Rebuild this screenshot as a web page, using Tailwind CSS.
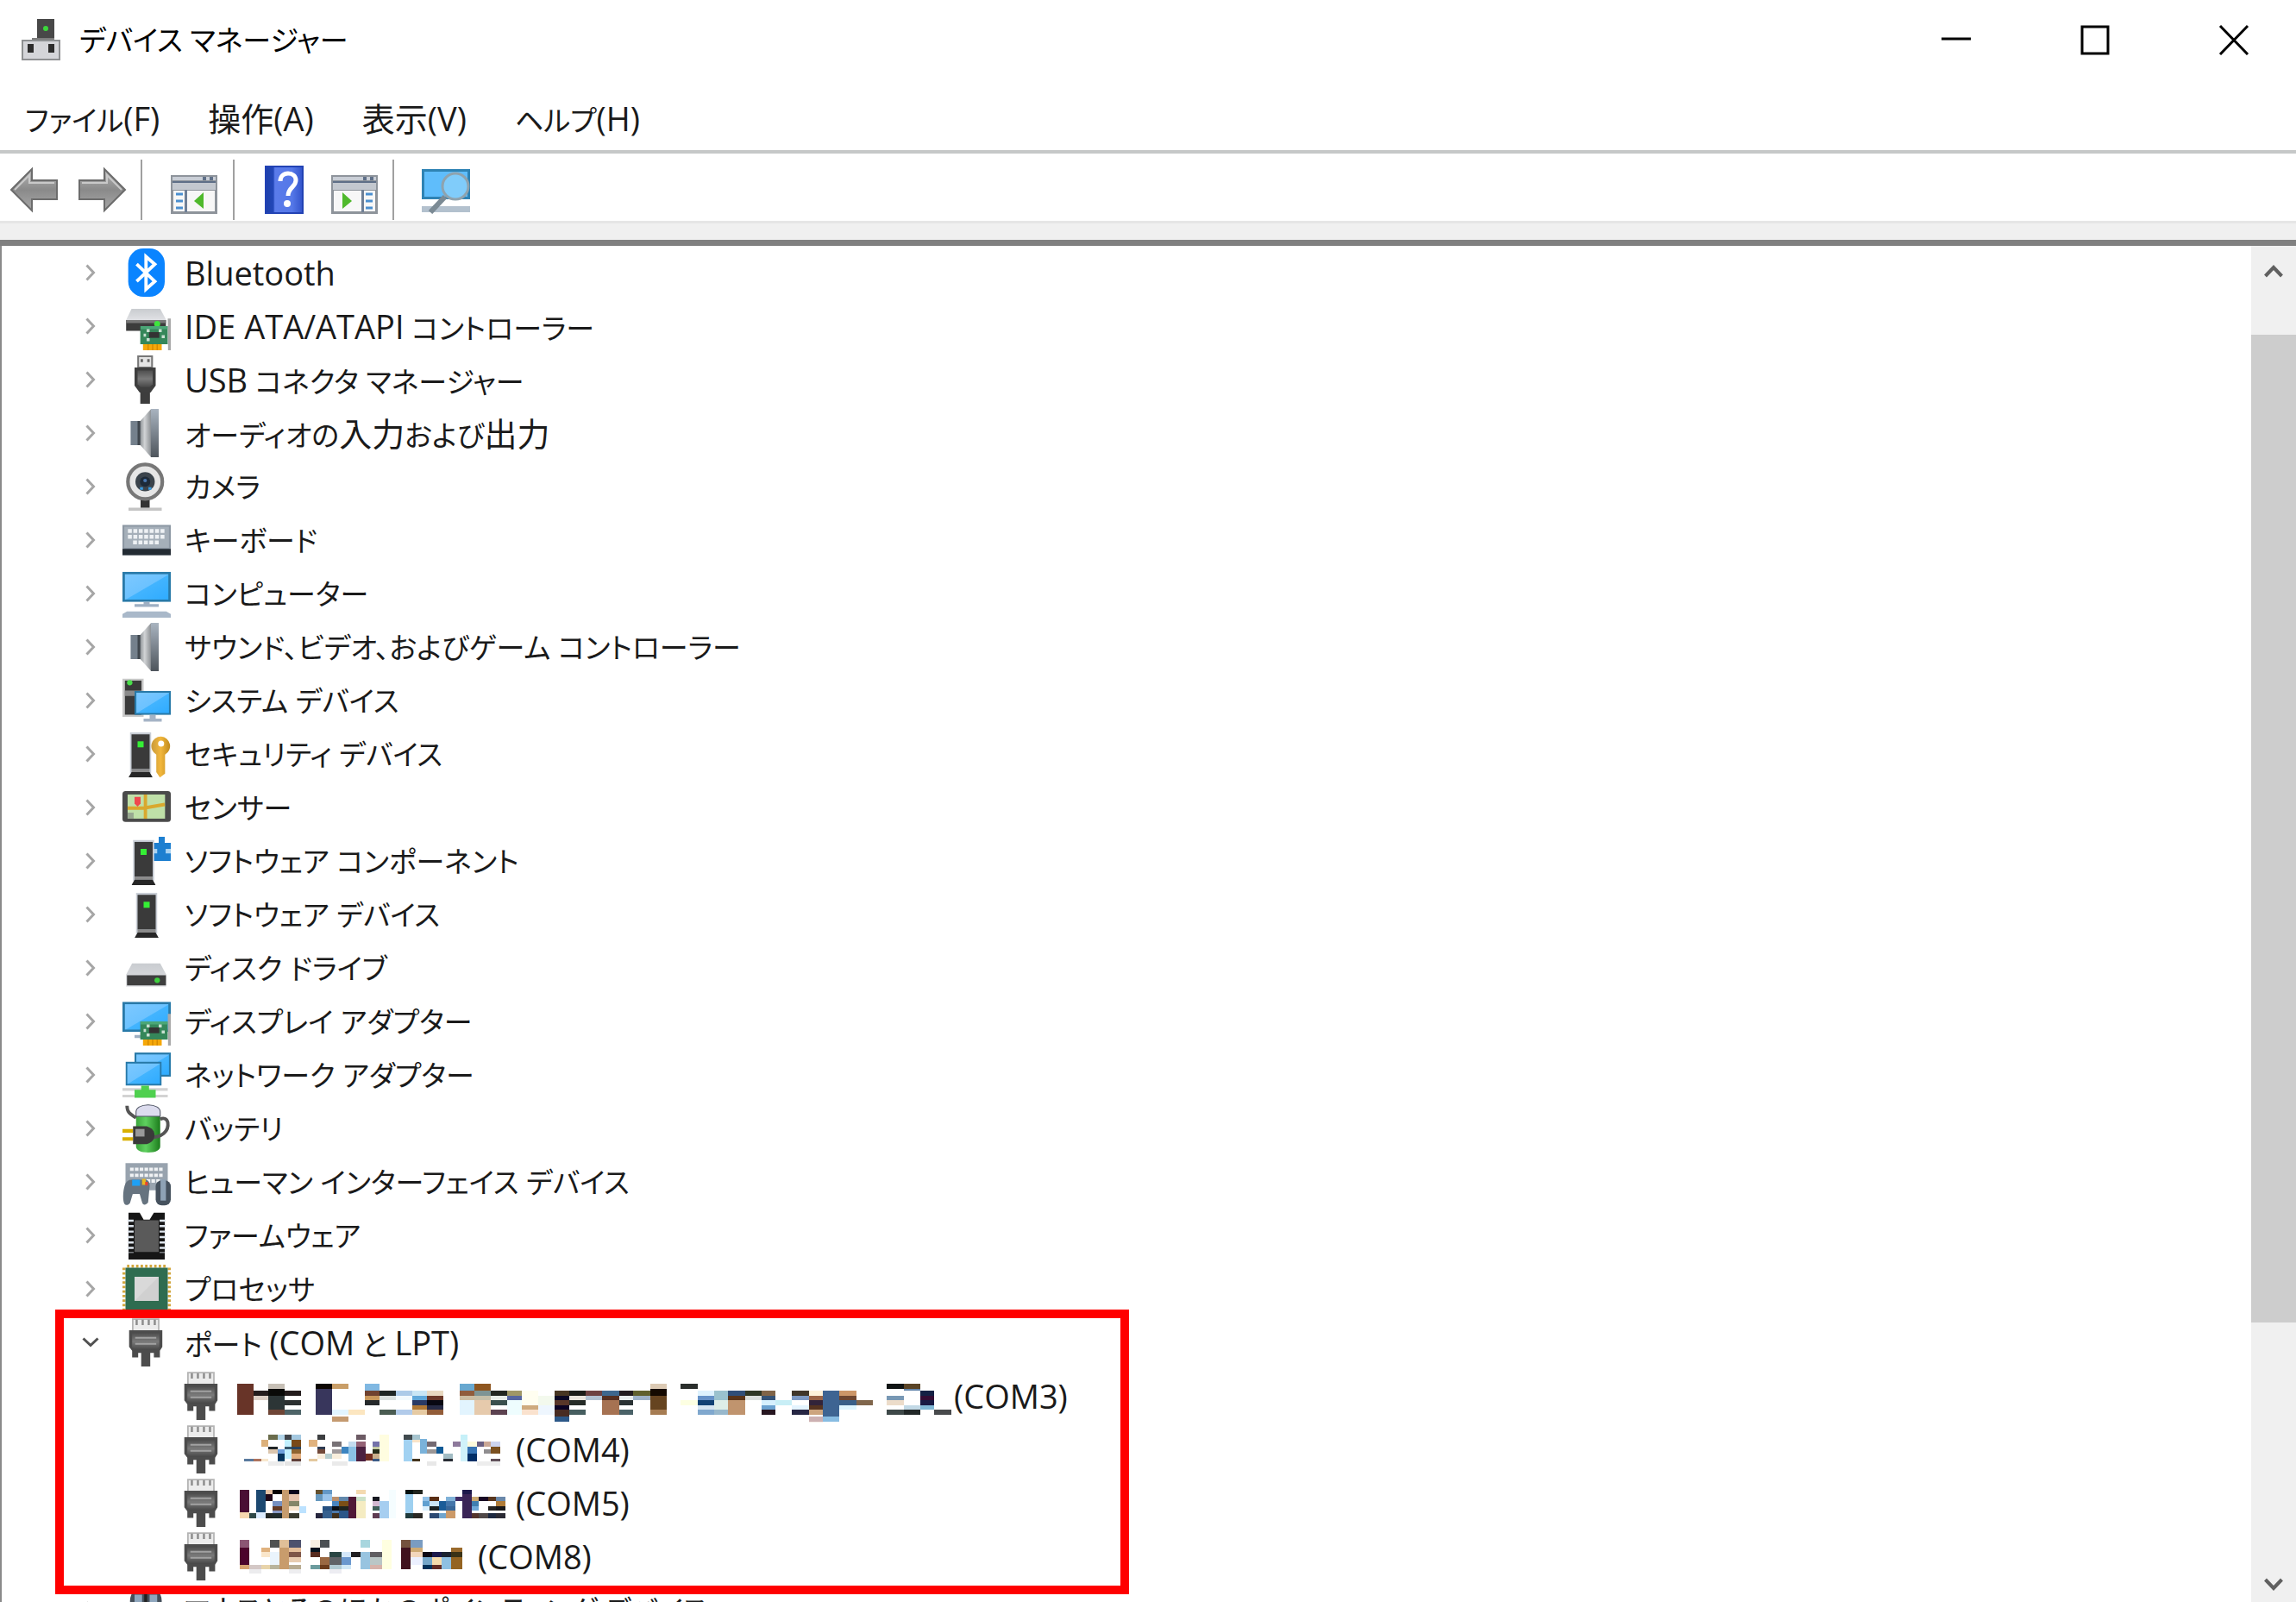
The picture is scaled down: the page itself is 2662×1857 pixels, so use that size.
<!DOCTYPE html>
<html lang="ja">
<head>
<meta charset="utf-8">
<title>デバイス マネージャー</title>
<script src="https://cdn.jsdelivr.net/npm/@tailwindcss/browser@4"></script>
</head>
<body class="h-screen overflow-hidden bg-white text-[#1a1a1a] font-['Open_Sans','Noto_Sans_CJK_JP',sans-serif] text-[33px] [font-feature-settings:'palt']">

<svg class="absolute h-0 w-0" aria-hidden="true">
  <defs>
    <linearGradient id="screen" x1="0" y1="0" x2="1" y2="1"><stop offset="0" stop-color="#7cc8ff"/><stop offset=".5" stop-color="#6cc2ff"/><stop offset=".52" stop-color="#42b4ff"/><stop offset="1" stop-color="#2fabff"/></linearGradient>
    <linearGradient id="metal" x1="0" y1="0" x2="1" y2="0"><stop offset="0" stop-color="#8f9498"/><stop offset=".4" stop-color="#d2d4d6"/><stop offset="1" stop-color="#8a8e92"/></linearGradient>
    <linearGradient id="lid" x1="0" y1="0" x2="0" y2="1"><stop offset="0" stop-color="#c9ccd0"/><stop offset="1" stop-color="#e0e1e4"/></linearGradient>
    <linearGradient id="rim" x1="0" y1="0" x2="0" y2="1"><stop offset="0" stop-color="#a9b4c0"/><stop offset="1" stop-color="#4e555c"/></linearGradient>
    <linearGradient id="plug" x1="0" y1="0" x2="0" y2="1"><stop offset="0" stop-color="#505050"/><stop offset=".5" stop-color="#7a7a7a"/><stop offset="1" stop-color="#484848"/></linearGradient>
    <linearGradient id="gold" x1="0" y1="0" x2="1" y2="0"><stop offset="0" stop-color="#c99a3a"/><stop offset=".5" stop-color="#f2b73c"/><stop offset="1" stop-color="#c08a1c"/></linearGradient>
    <linearGradient id="green" x1="0" y1="0" x2="1" y2="0"><stop offset="0" stop-color="#3ba53b"/><stop offset=".4" stop-color="#5fd05f"/><stop offset="1" stop-color="#1c7c1c"/></linearGradient>
    <linearGradient id="arrow" x1="0" y1="0" x2="0" y2="1"><stop offset="0" stop-color="#b5b5b5"/><stop offset=".5" stop-color="#8a8a8a"/><stop offset="1" stop-color="#a8a8a8"/></linearGradient>
    <linearGradient id="help" x1="0" y1="0" x2="1" y2="0"><stop offset="0" stop-color="#1c3fa8"/><stop offset=".22" stop-color="#2347b8"/><stop offset=".26" stop-color="#5a7bea"/><stop offset=".7" stop-color="#5578e8"/><stop offset="1" stop-color="#2f50c8"/></linearGradient>
  </defs>

  <symbol id="chevron" viewBox="0 0 12 20"><path d="M1.500 1.500L9.500 10L1.500 18.500" fill="none" stroke="#a6a6a6" stroke-width="3"/></symbol>

  <symbol id="card" viewBox="0 0 16 16">
    <rect x="5.900" y="8" width="9.100" height="6" fill="#35875a"/><path d="M6 8h9v1H6z" fill="#4ba677"/>
    <rect x="8.800" y="10" width="3.400" height="1.900" fill="#333"/>
    <path d="M8 9h1v1H8zM12 9h1v1h-1zM13 11h1v1h-1zM8 12h1v1H8zM7 10.500h.800v1H7z" fill="#c9e0d2"/>
    <rect x="6.800" y="14" width="6.200" height="2" fill="#f5a80a"/><path d="M8.500 14v2M10 14v2M11.500 14v2" stroke="#d58a00" stroke-width=".4"/>
    <path d="M15 5.500h1V16h-.900z" fill="#a9a9a9"/>
  </symbol>
  <symbol id="monitor" viewBox="0 0 16 10" preserveAspectRatio="none"><rect width="16" height="10" fill="#2879a8"/><rect x=".8" y=".8" width="14.400" height="8.400" fill="url(#screen)"/></symbol>
  <symbol id="tower" viewBox="0 0 8 15">
    <rect x=".5" y="0" width="7" height="13.500" fill="#c9ced6"/><rect x="1" y=".7" width="6" height="11.500" fill="#3a3a3a"/>
    <rect x="1" y="12.200" width="6" height="1" fill="#8a8a8a"/><path d="M1 13.200h6l1 1.800H0z" fill="#262626"/>
    <rect x="3" y="3" width="2" height="2" fill="#35ef35"/>
  </symbol>

  <symbol id="bluetooth" viewBox="0 0 16 16"><rect x="1.900" width="12.100" height="16" rx="5" fill="#0a84ff"/><path d="M4.700 5.200L10.700 10.900L7.800 13.500V2.700L10.700 5.200L4.700 10.900" fill="none" stroke="#fff" stroke-width="1.100"/></symbol>
  <symbol id="ide" viewBox="0 0 16 16"><path d="M3 2.300h9.500L14.500 6H1.200z" fill="url(#lid)"/><path d="M1.200 6h13.200v3.600H1.200z" fill="#3c3c3c"/><path d="M1.200 6h13.200v1H1.200z" fill="#777"/><circle cx="11.500" cy="7.300" r="1" fill="#3ee43e"/><use href="#card"/></symbol>
  <symbol id="usb" viewBox="0 0 16 16"><path d="M5.200.300h4.600V4H5.200z" fill="#e4e4e4" stroke="#777" stroke-width=".6"/><path d="M6 1.200h.800v1H6zM8.200 1.200H9v1h-.800z" fill="#666"/><path d="M4 4h7v6l-1.700 2.300H5.700L4 10z" fill="#3e3e3e"/><path d="M5 5h5v4.500L9 10.500H6l-1-1z" fill="url(#plug)"/><path d="M5.900 12.200h3.200V16H5.900z" fill="#3d3d3d"/></symbol>
  <symbol id="speaker" viewBox="0 0 16 16"><path d="M2.700 4h3.200v8H2.700z" fill="#74808c"/><path d="M5 4h1v8H5z" fill="#3f464d"/><path d="M5.900 4L9.500 0v16L5.900 12z" fill="url(#metal)"/><path d="M9.400 0H12v16H9.400z" fill="url(#rim)"/></symbol>
  <symbol id="camera" viewBox="0 0 16 16"><path d="M2 15h11v1H2z" fill="#c4c4c4"/><path d="M6 12h3v3H6z" fill="#333"/><circle cx="7.500" cy="6.400" r="5.700" fill="#e6e6e6" stroke="#777" stroke-width="1.200"/><circle cx="7.500" cy="6.400" r="3.200" fill="#3b444c"/><circle cx="7.500" cy="6.400" r="1.700" fill="#1d2a38"/><path d="M5.800 8.200h1v.900h-1zM8.600 8.200h1v.900h-1z" fill="#3a9be0"/><circle cx="7.500" cy="6" r=".6" fill="#4a78b0"/></symbol>
  <symbol id="keyboard" viewBox="0 0 16 16"><path d="M0 3h16v10H0z" fill="#8c97a3"/><path d="M.6 3.600h14.800v7H.6z" fill="#a5afb9"/><path d="M0 10.900h16V13H0z" fill="#232b33"/><path d="M1.800 5h12.400M1.800 6.900h12.400M3.500 8.800h9" stroke="#eef1f4" stroke-width="1.300" stroke-dasharray="1.300 .5"/></symbol>
  <symbol id="computer" viewBox="0 0 16 16"><use href="#monitor" y=".8" width="16" height="10"/><path d="M7 10.800h2v.700h3v.900H4v-.900h3z" fill="#9fb0c3"/><path d="M1.500 13.900h13l1.500.9V16H0v-1.200z" fill="#a9b8c9"/></symbol>
  <symbol id="system" viewBox="0 0 16 16"><path d="M0 .8h7v12.600H0z" fill="#c9c9c9"/><path d="M.8 1.400h5.500v11.300H.8z" fill="#3a3a3a"/><path d="M.8 4.700h5.500v1.800H.8z" fill="#8a8a8a"/><circle cx="2.400" cy="2.100" r=".9" fill="#4ade4a"/><use href="#monitor" x="4" y="4.800" width="12" height="8"/><path d="M9 12.800h2V14h2v1H7v-1h2z" fill="#a5b4c6"/></symbol>
  <symbol id="security" viewBox="0 0 16 16"><use href="#tower" x="2" y=".8" width="8" height="15"/><path d="M12.800 2.200a3.200 3.200 0 0 0-1.600 6V14l1.200 1.800 1.700-1.300V8.200A3.200 3.200 0 0 0 12.800 2.200zm0 1.400a1 1 0 1 1 0 2 1 1 0 0 1 0-2z" fill="url(#gold)"/></symbol>
  <symbol id="sensor" viewBox="0 0 16 16"><rect y="2.600" width="16" height="10.200" rx="1" fill="#4a4a4a"/><rect x="1.700" y="3.700" width="12.400" height="8" fill="#bfe0a8"/><path d="M1.700 8.200H7L14 7M7.600 3.700v8" stroke="#d9a82e" stroke-width="1.100" fill="none"/><path d="M4 4.500h2v2.200l-1 1-1-1z" fill="#f0484e"/><path d="M1.700 9.700h2v2h-2z" fill="#98a890"/></symbol>
  <symbol id="component" viewBox="0 0 16 16"><path d="M12 0h2v2h2v6h-6V2h2z" fill="#1d7fd0"/><path d="M10 4h1.500v1.500H10zM14.300 4H16v1.500h-1.700z" fill="#a8d2f2"/><use href="#tower" x="3" y="1" width="8" height="15"/></symbol>
  <symbol id="softdevice" viewBox="0 0 16 16"><use href="#tower" x="4" y=".8" width="8" height="15"/></symbol>
  <symbol id="disk" viewBox="0 0 16 16"><path d="M3.200 6.500h9.300l2 3.700v4H1.200v-4z" fill="url(#lid)"/><path d="M1.500 10.400h12.900v3.400H1.500z" fill="#3f3f3f"/><circle cx="11.500" cy="12.100" r=".9" fill="#3ed03e"/></symbol>
  <symbol id="display" viewBox="0 0 16 16"><use href="#monitor" y="1.500" width="16" height="10"/><path d="M4 12.500h3v1H4z" fill="#9fb0c3"/><use href="#card"/></symbol>
  <symbol id="network" viewBox="0 0 16 16"><use href="#monitor" x="4" y=".6" width="12" height="8"/><use href="#monitor" x="1" y="3.600" width="12" height="8"/><path d="M0 12.800h15M0 15h15" stroke="#d3d3d3" stroke-width=".9"/><path d="M6.200 11.600h2.600v1.300H11v2.700H4v-2.700h2.200z" fill="#4fd04f"/></symbol>
  <symbol id="battery" viewBox="0 0 16 16"><path d="M4.500 2.500C4.500 1.300 6 .2 8.500.2s4 1.100 4 2.300V14c0 1.200-1.500 2-4 2s-4-.8-4-2z" fill="url(#green)"/><path d="M4.500 2.500C4.500 1.300 6 .2 8.500.2s4 1.100 4 2.300V4h-8z" fill="#dcdcee" stroke="#55556a" stroke-width=".3"/><path d="M1.500.5C1.500 3 3 3.500 4.500 4.500M9 11c4 0 6.500-2 6-5-.3-1.300-1.500-1.600-2.500-1" fill="none" stroke="#555" stroke-width="1.100"/><path d="M0 8.800h3.500M0 11.500h3.500" stroke="#d9b000" stroke-width="1.200"/><path d="M3.500 7.300H8c2 .6 2.600 1.800 2.600 2.900 0 1.500-.8 2.500-2.600 3H3.500z" fill="#3a3a3a"/><path d="M4.300 8.200h3v2.500h-3z" fill="#999"/></symbol>
  <symbol id="hid" viewBox="0 0 16 16"><path d="M1 1.800h14v9H1z" fill="#98a3ae"/><path d="M2.500 3.800h11M2.500 5.800h11M8 7.700h5" stroke="#f0f2f4" stroke-width="1.100" stroke-dasharray="1.200 .4"/><path d="M1 8.500C2 7 3 7.300 4 7.300h3c1.500 0 2 .5 2 2l-.5 5.500c-.8 1-1.700 1-2 0L5.700 12H3.400l-.9 3c-.7 1-1.700.8-2 0-.5-1.500-.3-4.700.5-6.500z" fill="#66737f"/><path d="M3.200 7.300h2.600v2H3.200z" fill="#1ea0f5"/><path d="M6.500 7h1.200v2H6.500z" fill="#e8b820"/><path d="M7.500 8h.9v1.200h-.9z" fill="#e8442c"/><rect x="11" y="7.500" width="5" height="8.300" rx="2" fill="#46525e"/><path d="M12.600 7.200h1.800v7h-1.800z" fill="#8ea2b5"/></symbol>
  <symbol id="firmware" viewBox="0 0 16 16"><path d="M2 .5h3.700L7 2.800h2L10.400.5H14V16H2z" fill="#161616"/><path d="M4 3h8v10.500H4z" fill="#5a5a5a"/><path d="M2.700 2.800v11M13.300 2.800v11" stroke="#dfe6ee" stroke-width="2" stroke-dasharray=".7 1.100"/></symbol>
  <symbol id="cpu" viewBox="0 0 16 16"><path d="M.5 1v14M15.500 1v14M1.500.5h13M1.500 15.500h13" stroke="#d2a63c" stroke-width="1" stroke-dasharray=".8 .7"/><path d="M1 1h14v14H1z" fill="#2f6c50"/><path d="M4 4h8v8H4z" fill="#d9d9d9"/><path d="M12 4v8H4z" fill="#d0d0d0"/></symbol>
  <symbol id="port" viewBox="0 0 16 16"><path d="M3.400.3h8.600v4H3.400z" fill="#ececec" stroke="#b4b4b4" stroke-width=".5"/><path d="M4.700.5v1.800M6.700.5v1.800M8.700.5v1.800M10.700.5v1.800" stroke="#8c8c8c" stroke-width=".7"/><path d="M2.200 4h11v5.500l-.8 1.300v2.200h-2v-1.500H9.200V16h-3v-4.500H5.200V13h-2v-2.200l-1-1.300z" fill="#4c4c4c"/><path d="M3.200 5h9v4.500l-1 1h-7l-1-1z" fill="url(#plug)"/><path d="M4.200 6.500h7M4.200 8.500h7" stroke="#a2a2a2" stroke-width=".6"/></symbol>
  <symbol id="mouse" viewBox="0 0 16 16"><rect x="2.500" y=".5" width="10.500" height="15" rx="4.500" fill="#454f5a"/><path d="M4 3h2.500v5H4zM9 3h2.500v5H9z" fill="#8fa6bd"/><path d="M7.200 1h1v8h-1z" fill="#222"/></symbol>
</svg>

<div class="flex h-full flex-col">
  <header class="flex h-[92px] shrink-0 items-center">
    <svg class="ml-[24px] h-[48px] w-[48px] shrink-0" viewBox="0 0 48 48"><path d="M19 0h20v26H19z" fill="#484848"/><path d="M13 22h26v4H13z" fill="#7d7d7d"/><circle cx="29" cy="11" r="3" fill="#3bd83b"/><path d="M1 24h45v24H1z" fill="#8e9092"/><path d="M3 26h41v20H3z" fill="#d4d5d9"/><path d="M8 29h7v10H8zM32 29h7v10h-7z" fill="#2c2c2c"/></svg>
    <h1 class="ml-[20px] leading-none text-black">デバイス マネージャー</h1>
    <div class="ml-auto flex gap-[17px]">
      <button class="flex h-[92px] w-[144px] items-center justify-center" aria-label="最小化"><svg class="h-[36px] w-[36px]" viewBox="0 0 36 36"><path d="M1 17h34" stroke="#000" stroke-width="3"/></svg></button>
      <button class="flex h-[92px] w-[144px] items-center justify-center" aria-label="最大化"><svg class="h-[36px] w-[36px]" viewBox="0 0 36 36"><path d="M3 3h30v31H3z" fill="none" stroke="#000" stroke-width="3"/></svg></button>
      <button class="flex h-[92px] w-[144px] items-center justify-center" aria-label="閉じる"><svg class="h-[36px] w-[36px]" viewBox="0 0 36 36"><path d="M2 2l32 33M34 2L2 35" stroke="#000" stroke-width="3"/></svg></button>
    </div>
  </header>

  <nav class="flex h-[86px] shrink-0 items-center gap-[56px] border-b-4 border-[#c6c8c8] pt-[8px] pl-[29px] leading-none">
    <button>ファイル<span class="text-[38px]">(F)</span></button>
    <button><span class="text-[38px]">操作(A)</span></button>
    <button><span class="text-[38px]">表示(V)</span></button>
    <button>ヘルプ<span class="text-[38px]">(H)</span></button>
  </nav>

  <div class="flex h-[78px] shrink-0 items-center pt-[6px] pl-[11px]" role="toolbar">
    <button aria-label="戻る"><svg class="h-[56px] w-[56px]" viewBox="0 0 56 56"><path d="M2 28L26 4v13h29v22H26v13z" fill="url(#arrow)" stroke="#6c6c6c" stroke-width="2"/><path d="M6 28L23 11v9h29" fill="none" stroke="#c9c9c9" stroke-width="2"/></svg></button>
    <button class="ml-[24px]" aria-label="進む"><svg class="h-[56px] w-[56px]" viewBox="0 0 56 56"><path d="M54 28L30 4v13H1v22h29v13z" fill="url(#arrow)" stroke="#6c6c6c" stroke-width="2"/><path d="M4 20h29v-9l17 17" fill="none" stroke="#c9c9c9" stroke-width="2"/></svg></button>
    <span class="ml-[16px] h-[70px] w-[2px] bg-[#a0a0a0]"></span>
    <button class="ml-[32px]" aria-label="コンソール ツリーの表示"><svg class="h-[56px] w-[56px]" viewBox="0 0 56 56"><path d="M1 11h54v45H1z" fill="#8e949b"/><path d="M3 13h50v4H3z" fill="#c9ced6"/><path d="M3 18h50v2H3z" fill="#5f7088"/><path d="M38 13h4v4h-4zM46 13h4v4h-4z" fill="#5f7088"/><path d="M3 20h50v8H3z" fill="#c3c8cf"/><path d="M4 29h13v24H4zM20 29h32v24H20z" fill="#f7f7f7"/><path d="M7 33h8M7 41h8M7 49h8" stroke="#4a8fd0" stroke-width="3"/><path d="M17 28h3v26h-3z" fill="#6e7f96"/><path d="M39 31v19L28 41z" fill="#4fb92c"/></svg></button>
    <span class="ml-[17px] h-[70px] w-[2px] bg-[#a0a0a0]"></span>
    <button class="ml-[35px]" aria-label="ヘルプ"><svg class="h-[56px] w-[45px]" viewBox="0 0 45 56"><path d="M0 0h45v56H0z" fill="url(#help)"/><path d="M1 1h43v54H1z" fill="none" stroke="#2242b4" stroke-width="2"/><path d="M18 18c0-6 4-9 9-9s9 3 9 8c0 8-9 8-9 18" fill="none" stroke="#fff" stroke-width="5"/><circle cx="26" cy="44" r="4" fill="#fff"/></svg></button>
    <button class="ml-[31px]" aria-label="操作ウィンドウの表示"><svg class="h-[56px] w-[56px]" viewBox="0 0 56 56"><path d="M1 11h54v45H1z" fill="#8e949b"/><path d="M3 13h50v4H3z" fill="#c9ced6"/><path d="M3 18h50v2H3z" fill="#5f7088"/><path d="M38 13h4v4h-4zM46 13h4v4h-4z" fill="#5f7088"/><path d="M3 20h50v8H3z" fill="#c3c8cf"/><path d="M4 29h32v24H4zM39 29h13v24H39z" fill="#f7f7f7"/><path d="M41 33h8M41 41h8M41 49h8" stroke="#4a8fd0" stroke-width="3"/><path d="M36 28h3v26h-3z" fill="#6e7f96"/><path d="M14 31v19l11-9z" fill="#4fb92c"/></svg></button>
    <span class="ml-[16px] h-[70px] w-[2px] bg-[#a0a0a0]"></span>
    <button class="ml-[32px]" aria-label="ハードウェア変更のスキャン"><svg class="h-[56px] w-[56px]" viewBox="0 0 56 56"><path d="M0 4h56v35H0z" fill="#2e83b4"/><path d="M3 7h50v29H3z" fill="#5fbdfb"/><path d="M0 47h56v7H0z" fill="#b3c1ce"/><path d="M27 36L10 54" stroke="#7b8a94" stroke-width="6"/><circle cx="39" cy="24" r="15" fill="#80ccfa" stroke="#8fa3ae" stroke-width="3"/></svg></button>
  </div>

  <div class="h-[29px] shrink-0 border-t-3 border-b-7 border-t-[#e6e6e6] border-b-[#808080] bg-[#f0f0f0]"></div>

  <main class="flex min-h-0 flex-1 border-l-2 border-[#8a8a8a]">
    <div class="min-w-0 flex-1 overflow-hidden leading-none">
      <ul id="tree"></ul>
    </div>
    <div class="flex w-[52px] shrink-0 flex-col bg-[#f0f0f0]" aria-hidden="true">
      <button class="flex h-[60px] items-center justify-center" tabindex="-1"><svg class="h-[18px] w-[22px]" viewBox="0 0 22 18"><path d="M1.500 14L11 4l9.500 10" fill="none" stroke="#606060" stroke-width="4"/></svg></button>
      <div class="mt-[43px] min-h-0 flex-1 bg-[#cdcdcd]"></div>
      <button class="mt-[282px] flex h-[42px] items-center justify-center" tabindex="-1"><svg class="h-[18px] w-[22px]" viewBox="0 0 22 18"><path d="M1.500 4L11 14l9.500-10" fill="none" stroke="#606060" stroke-width="4"/></svg></button>
    </div>
  </main>
</div>

<script>
  // Segments written between braces are Latin letters or kanji, set larger than kana.
  const devices = [
    ['bluetooth', '{Bluetooth}'],
    ['ide', '{IDE ATA/ATAPI} コントローラー'],
    ['usb', '{USB} コネクタ マネージャー'],
    ['speaker', 'オーディオの{入力}および{出力}'],
    ['camera', 'カメラ'],
    ['keyboard', 'キーボード'],
    ['computer', 'コンピューター'],
    ['speaker', 'サウンド、ビデオ、およびゲーム コントローラー'],
    ['system', 'システム デバイス'],
    ['security', 'セキュリティ デバイス'],
    ['sensor', 'センサー'],
    ['component', 'ソフトウェア コンポーネント'],
    ['softdevice', 'ソフトウェア デバイス'],
    ['disk', 'ディスク ドライブ'],
    ['display', 'ディスプレイ アダプター'],
    ['network', 'ネットワーク アダプター'],
    ['battery', 'バッテリ'],
    ['hid', 'ヒューマン インターフェイス デバイス'],
    ['firmware', 'ファームウェア'],
    ['cpu', 'プロセッサ'],
  ];

  // Masked port names: x, y, width, height, colour of each block, at a third of a pixel per unit.
  const ports = [
    { name: '(COM3)', width: 836, top: -9, cells: `15 41 58 108 #683428;73 66 50 17 #241c1c;73 83 50 16 #dccfc5;123 41 57 18 #c7c0b6;123 59 57 24 #0a0a08;123 83 57 50 #2c3536;123 133 57 16 #6e4536;180 66 58 17 #241c1c;180 99 58 17 #2c3030;180 133 58 16 #4e6468;288 41 57 18 #0d0703;288 59 57 90 #38365c;345 41 58 18 #c99e68;345 133 58 16 #e2f5ff;345 156 58 17 #c49a70;403 133 57 16 #fce6c0;460 41 50 25 #80b8e2;460 66 50 17 #704230;460 83 50 16 #c9985c;460 99 50 17 #262a2c;510 66 58 17 #1e2624;510 83 58 16 #d9e0de;510 133 58 16 #4a5c52;568 66 57 17 #accbe8;568 133 57 16 #b2cbea;568 83 57 16 #f2fafd;625 66 50 17 #c9e6f5;625 83 50 16 #60a8da;625 99 50 17 #2a3a64;625 116 50 17 #b07834;625 133 50 16 #e6caa2;675 66 58 17 #e8d8c0;675 83 58 16 #6a3828;675 99 58 17 #080812;675 116 58 17 #262a44;675 133 58 16 #925c38;790 41 50 25 #68a8d0;790 66 50 17 #905c3c;790 83 50 16 #ccbda2;790 99 50 50 #e2f4fe;840 41 58 25 #8e5620;840 66 58 17 #7e9494;840 83 58 16 #c6bfa8;840 99 58 50 #e6caac;898 66 57 17 #222620;898 83 57 16 #e8ede8;898 99 57 17 #3a504e;898 133 57 16 #5c4250;955 66 50 17 #a09766;955 83 50 16 #5666a0;955 99 50 50 #eefdfe;1005 66 58 50 #fffef0;1005 116 58 17 #ceaa7e;1005 133 58 16 #fae2ce;1063 83 57 33 #f3f9ed;1063 116 57 33 #eef6fe;1120 66 50 17 #483622;1120 83 50 16 #0c0824;1120 99 50 17 #583628;1120 116 50 17 #0c0424;1120 133 50 23 #482c22;1120 156 50 17 #2c5888;1170 66 58 17 #1c1c18;1170 83 58 16 #eae4dc;1170 99 58 17 #262c28;1170 133 58 16 #465e60;1228 66 57 17 #6e4242;1228 83 57 16 #b2c2d2;1285 66 58 17 #3e688e;1285 83 58 16 #563020;1285 99 58 50 #a67252;1343 66 50 17 #221a1e;1343 83 50 16 #e8ecec;1343 99 50 17 #2a3234;1343 133 50 16 #4a6268;1393 66 58 17 #60602e;1393 83 58 16 #9eb2c8;1451 41 57 18 #dccab4;1451 59 57 24 #140900;1451 83 57 50 #664420;1451 133 57 16 #a67c52;1558 41 58 18 #2a2e2c;1558 99 58 17 #fdffe2;1616 66 57 17 #def2fe;1616 83 57 16 #6692c8;1616 99 57 17 #124274;1616 116 57 17 #d6e6f2;1616 133 57 16 #80a8ce;1673 66 50 33 #9ac2ce;1673 99 50 34 #deeee8;1673 133 50 16 #98b8cc;1723 66 58 17 #304e78;1723 83 58 16 #5a3418;1723 99 58 50 #c0946e;1781 66 57 17 #2e3624;1781 83 57 16 #dadedc;1838 66 50 17 #806448;1838 83 50 16 #345276;1838 99 50 17 #d6f0fe;1838 116 50 17 #6ca2d0;1838 133 50 16 #261620;1888 99 57 17 #c8eef6;1945 66 58 17 #40362a;1945 83 58 16 #7e9ac4;1945 116 58 17 #e4f4ff;1945 133 58 16 #262644;2003 66 50 17 #fdf2da;2003 83 50 16 #9a6446;2003 99 50 17 #32243a;2003 116 50 17 #563420;2003 133 50 16 #cca47e;2003 156 50 17 #ccb0b2;2003 173 50 16 #f6eee8;2053 66 57 90 #3e6492;2053 156 57 17 #88bce2;2110 66 58 17 #cc9668;2110 83 58 16 #6e4630;2110 99 58 17 #3a6088;2110 116 58 17 #dff6ff;2168 99 57 17 #80664c;2275 41 58 18 #101414;2275 83 58 16 #7898b4;2275 99 58 17 #ecdcca;2275 133 58 16 #3e4848;2333 41 57 18 #5a4426;2333 59 57 7 #6486ac;2333 116 57 17 #c2d9e6;2333 133 57 16 #222828;2390 66 50 17 #142044;2390 83 50 16 #340c34;2390 99 50 17 #181a44;2390 116 50 17 #80b8d6;2440 133 58 16 #484a4c` },
    { name: '(COM4)', width: 328, top: 0, cells: `40 126 33 9 #5a7a9e;73 126 25 9 #ae725c;98 60 24 24 #dcb07a;98 126 24 9 #f8e8ce;122 42 34 18 #6a6c4c;122 84 34 10 #202426;122 94 34 14 #dcc6ae;156 42 24 18 #b2d4e8;156 94 24 14 #6c9eda;156 108 24 24 #06345c;156 132 24 4 #28587a;180 42 25 18 #40444a;180 60 25 24 #c2f0fe;180 84 25 10 #38586c;180 94 25 32 #c2f0fe;205 42 33 18 #a4c8e0;205 60 33 24 #784a18;205 84 33 10 #284460;205 94 33 14 #8e6430;205 108 33 18 #e2ae7e;205 126 33 9 #60403a;263 60 32 24 #e0b27e;263 126 32 9 #e4c89e;295 42 25 18 #3c3e40;295 84 25 10 #2e3a50;295 94 25 14 #724a3a;295 108 25 18 #f8eedc;320 108 25 18 #b6cecf;345 66 33 18 #787276;345 94 33 14 #a09a9c;345 108 33 18 #f8eedc;378 84 25 24 #3c84c0;403 66 25 18 #c4dcf0;403 84 25 51 #8cc2e6;428 42 33 18 #6c5a64;428 66 33 18 #946276;428 84 33 51 #4c2040;461 108 25 24 #722c20;486 66 25 18 #7472aa;486 84 25 10 #c4caa4;486 94 25 14 #262c1a;486 108 25 18 #caae8c;486 126 25 9 #3a5a86;511 42 33 93 #fffde0;593 42 32 18 #404a4e;593 60 32 75 #a2d2f2;625 42 25 18 #a6c4ce;625 60 25 8 #f8e4c8;625 126 25 9 #44341c;652 56 24 52 #7ab2da;676 66 32 18 #746a72;676 94 32 14 #9a9696;708 84 25 24 #105a96;733 108 32 18 #a2bcc4;733 126 32 9 #282c34;766 66 25 18 #8e7a9c;791 42 25 18 #c6f0f8;791 60 25 75 #d0f2fa;816 66 32 18 #fcfadc;816 84 32 24 #3674b4;816 108 32 27 #022e66;848 66 25 18 #6a6082;873 66 25 18 #caa896;873 94 25 14 #908e90;898 66 33 18 #ccd4f0;898 84 33 24 #7a5020;898 126 33 9 #60505a;122 136 56 14 #ececec;180 136 56 14 #e5e5e5;345 136 55 14 #eaeaea;676 136 32 14 #e8e8e8;848 136 82 14 #ededed` },
    { name: '(COM5)', width: 328, top: 186, cells: `23 233 33 79 #4a0e34;23 312 33 20 #f6d8b0;56 316 24 16 #2e4848;80 233 34 79 #1c4870;80 312 34 20 #dcecff;114 233 24 16 #e6c2a4;114 249 24 24 #200818;114 316 24 16 #222624;138 233 33 16 #080404;138 273 33 17 #7690c0;138 290 33 16 #643a24;138 306 33 10 #8a9ac6;138 316 33 16 #202a2a;171 233 25 99 #c69c6e;196 233 34 16 #08041c;196 249 34 24 #e4c2ac;196 273 34 17 #848668;196 290 34 16 #f8e4cc;196 316 34 16 #3a3c30;230 290 25 24 #bce2ff;288 233 24 16 #64502e;288 249 24 24 #6698be;288 316 24 16 #26263e;312 233 33 16 #6498c6;312 249 33 24 #9ac4ea;312 290 33 16 #265080;312 306 33 26 #36608e;345 257 25 16 #bc906c;345 273 25 17 #4884be;345 290 25 16 #0a0e14;345 306 25 10 #4e7aaa;345 316 25 16 #40301c;370 257 33 16 #6288ac;370 273 33 17 #7a4e16;370 290 33 16 #1e2420;370 306 33 26 #2c5688;403 257 25 75 #501836;428 233 33 16 #f4dab0;428 257 33 16 #cce2c8;428 273 33 59 #f5ecc2;486 257 25 16 #161820;486 273 25 17 #d2b8d0;486 290 25 16 #40605a;486 316 25 16 #603c52;511 273 32 59 #a6cef0;543 233 24 99 #f5fdff;601 233 25 16 #00100e;601 249 25 67 #9ed0f0;601 316 25 16 #1e3a3c;626 233 33 16 #20241e;626 316 33 16 #2a2824;659 257 25 16 #92c2e8;659 273 25 17 #60a0d0;659 290 25 16 #d9effd;684 257 32 16 #5a2e14;684 273 32 17 #cae4f6;684 290 32 16 #1a2022;684 316 32 16 #2c4a74;716 273 25 33 #1a5c98;716 316 25 16 #70a4cc;741 257 33 16 #80b2d8;741 273 33 17 #4476aa;741 290 33 16 #386698;741 306 33 26 #cc9a68;774 257 25 16 #402c64;799 233 32 16 #1c184a;799 249 32 83 #3a2456;831 257 25 16 #ccaa72;831 273 25 17 #407eb0;831 290 25 16 #70a8d8;831 316 25 16 #54342c;856 257 33 16 #180824;856 316 33 16 #504848;889 257 25 16 #58361e;889 290 25 16 #262422;889 316 25 16 #1c2840;914 257 33 16 #6a88aa;914 273 33 17 #b07c38;914 290 33 16 #18181a;914 316 33 16 #2a2a34` },
    { name: '(COM8)', width: 284, top: 369, cells: `23 406 33 25 #8c5674;23 431 33 60 #4c042c;23 491 33 15 #d6a270;56 491 42 15 #d4c8c6;98 431 32 17 #e0b27e;98 448 32 16 #fae6ca;98 491 32 15 #e8d4aa;130 406 33 25 #505252;130 448 33 43 #eaf4fc;130 491 33 15 #b8b49c;163 406 33 25 #e0bf98;163 431 33 75 #c89c6c;196 406 42 25 #4e526e;196 431 42 17 #e4be9a;196 448 42 16 #7e5648;196 464 42 18 #e8ccb0;196 491 42 15 #b8ac92;271 406 32 25 #f8f0e4;271 431 32 17 #04121e;271 448 32 16 #582c20;271 491 32 15 #6c9c9e;303 406 33 25 #4c5054;303 464 33 27 #9a6842;303 491 33 15 #6c3c1c;336 448 42 16 #2a4644;336 464 42 27 #606468;336 491 42 15 #b2ccd4;378 448 33 16 #d4e8fa;378 464 33 27 #6a98ce;378 491 33 15 #d0e8f6;411 448 33 16 #201e20;444 406 33 25 #a8d6de;444 448 33 58 #98c4e0;477 448 41 16 #605e62;477 464 41 27 #bac6c6;477 491 41 15 #d6b2aa;518 406 33 100 #ffffe0;585 406 33 25 #74523e;585 431 33 75 #40121e;618 406 41 25 #7a9cc2;618 431 41 17 #ceaa74;618 448 41 16 #f2d6bc;618 464 41 27 #ecf0ff;659 448 33 16 #0c0814;659 464 33 27 #74a6ca;659 491 33 15 #00305a;692 448 33 16 #1c1a4c;692 464 33 27 #f6dcac;692 491 33 15 #642c24;725 448 33 16 #1c2430;725 464 33 42 #8ec0e2;758 431 41 17 #9a6a2c;758 448 41 16 #3a3216;758 464 41 42 #946422;56 506 42 15 #ececee;196 506 42 15 #eeeef0;336 506 42 15 #ededf2` },
  ];

  const label = text => text.replace(/\{(.+?)\}/g, '<span class="text-[38px]">$1</span>');
  const icon = id => `<svg class="h-[56px] w-[56px] shrink-0"><use href="#${id}"/></svg>`;
  const chevron = '<svg class="mr-[31px] h-[20px] w-[12px] shrink-0"><use href="#chevron"/></svg>';
  const row = (id, text) => `<li class="flex h-[62px] items-center pl-[97px] whitespace-nowrap">${chevron}${icon(id)}<span class="ml-[16px]">${label(text)}</span></li>`;

  const mosaic = ({ cells, width, top }) => `<svg class="h-[62px] shrink-0" style="width:${width}px" viewBox="0 ${top} ${width * 3} 186" shape-rendering="crispEdges">${
    cells.split(';').map(c => {
      const [x, y, w, h, fill] = c.split(' ');
      return `<rect x="${x}" y="${y}" width="${w}" height="${h}" fill="${fill}"/>`;
    }).join('')}</svg>`;

  document.getElementById('tree').innerHTML =
    devices.map(([id, text]) => row(id, text)).join('') +
    `<li class="relative">
      <div class="flex h-[62px] items-center pl-[93px]">
        <svg class="mr-[27px] h-[12px] w-[20px] shrink-0" viewBox="0 0 20 12"><path d="M1.500 1.500L10 9.500L18.500 1.500" fill="none" stroke="#505050" stroke-width="3"/></svg>
        ${icon('port')}<span class="ml-[16px]">${label('ポート {(COM} と {LPT)}')}</span>
      </div>
      <ul>${ports.map(p => `<li class="flex h-[62px] items-center pl-[204px] whitespace-nowrap">${icon('port')}<span class="ml-[8px] flex items-center">${mosaic(p)}<span class="text-[38px]">${p.name}</span></span></li>`).join('')}</ul>
      <div class="pointer-events-none absolute -top-[7px] -bottom-[13px] left-[62px] w-[1245px] border-10 border-[#ff0000]"></div>
    </li>` +
    row('mouse', 'マウスとそのほかのポインティング デバイス');
</script>
</body>
</html>
